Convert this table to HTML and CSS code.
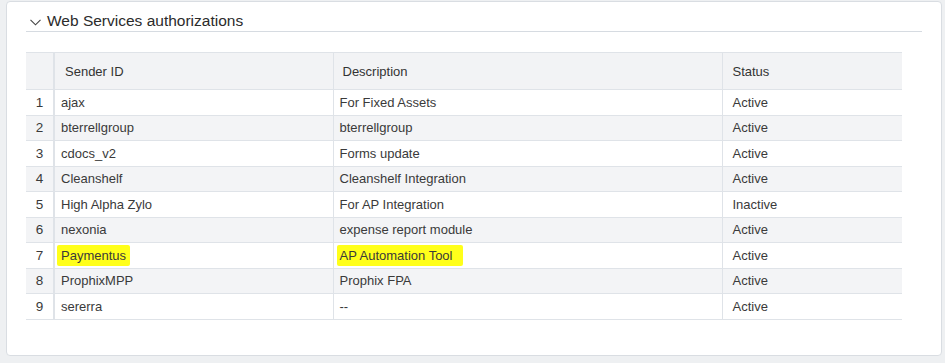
FILE: index.html
```html
<!DOCTYPE html>
<html>
<head>
<meta charset="utf-8">
<link rel="stylesheet" href="styles.css">
</head>
<body>
<div class="card">
  <div class="section-title">
    <svg class="chevron" width="11" height="7" viewBox="0 0 11 7"><path d="M0.5 0.8 L5.5 5.8 L10.5 0.8" fill="none" stroke="#444" stroke-width="1.1"/></svg>
    <span>Web Services authorizations</span>
  </div>
  <table class="grid">
    <colgroup>
      <col class="c-num"><col class="c-sender"><col class="c-desc"><col class="c-status">
    </colgroup>
    <thead>
      <tr><th></th><th class="h-sender">Sender ID</th><th class="h-desc">Description</th><th class="h-status">Status</th></tr>
    </thead>
    <tbody>
      <tr><td class="num">1</td><td>ajax</td><td>For Fixed Assets</td><td class="status">Active</td></tr>
      <tr><td class="num">2</td><td>bterrellgroup</td><td>bterrellgroup</td><td class="status">Active</td></tr>
      <tr><td class="num">3</td><td>cdocs_v2</td><td>Forms update</td><td class="status">Active</td></tr>
      <tr><td class="num">4</td><td>Cleanshelf</td><td>Cleanshelf Integration</td><td class="status">Active</td></tr>
      <tr><td class="num">5</td><td>High Alpha Zylo</td><td>For AP Integration</td><td class="status">Inactive</td></tr>
      <tr><td class="num">6</td><td>nexonia</td><td>expense report module</td><td class="status">Active</td></tr>
      <tr><td class="num">7</td><td><span class="hl hl-a">Paymentus</span></td><td><span class="hl hl-b">AP Automation Tool</span></td><td class="status">Active</td></tr>
      <tr><td class="num">8</td><td>ProphixMPP</td><td>Prophix FPA</td><td class="status">Active</td></tr>
      <tr><td class="num">9</td><td>sererra</td><td>--</td><td class="status">Active</td></tr>
    </tbody>
  </table>
</div>
</body>
</html>
```

FILE: styles.css
```css
html, body {
  margin: 0;
  padding: 0;
  background: #eef0f2;
  font-family: "Liberation Sans", Arial, sans-serif;
  color: #3a3a3a;
}

.card {
  margin: 1px 0 0 6px;
  width: 915px;
  height: 353px;
  background: #fff;
  border: 1px solid #d9dde2;
  border-radius: 4px;
  padding: 0 0 0 19px;
  box-sizing: content-box;
}

.section-title {
  display: flex;
  align-items: center;
  gap: 6px;
  width: 896px;
  height: 30px;
  border-bottom: 1px solid #d6dbe1;
  padding-left: 4px;
  box-sizing: border-box;
  font-size: 15.5px;
  color: #2b2b2b;
  padding-top: 9px;
}

.chevron {
  margin-top: 3px;
}

.grid {
  margin-top: 20px;
  border-collapse: collapse;
  table-layout: fixed;
  width: 876px;
  font-size: 13px;
}

.c-num { width: 28px; }
.c-sender { width: 279px; }
.c-desc { width: 389px; }
.c-status { width: 180px; }

.grid th {
  background: #f2f3f5;
  height: 36px;
  font-weight: normal;
  text-align: left;
  color: #333;
  border-top: 1px solid #dfe3e8;
  border-bottom: 1px solid #dfe3e8;
  border-left: 1px solid #dfe3e8;
  padding: 0;
  font-size: 13px;
}

.grid th:first-child { border-left: none; }
.grid th:nth-child(2) { border-left: 2px solid #dfe3e8; }

.h-sender { padding-left: 10px !important; }
.h-desc { padding-left: 9px !important; }
.h-status { padding-left: 10px !important; }

.grid td {
  height: 24.5px;
  padding: 0 0 0 6px;
  border-bottom: 1px solid #dfe3e8;
  border-left: 1px solid #dfe3e8;
  white-space: nowrap;
}

.grid td:first-child { border-left: none; }
.grid td:nth-child(2) { border-left: 2px solid #dfe3e8; }

.grid td.num {
  text-align: center;
  padding: 0;
  font-size: 13.5px;
}

.grid td.status { padding-left: 10px; }

.grid tbody tr:nth-child(even) td { background: #f3f4f6; }

.hl {
  background: #ffff1a;
  padding: 3px 4px 3px 4px;
  margin-left: -4px;
  border-radius: 2px;
}

.hl-b { padding-right: 10px; margin-left: -3px; padding-left: 3px; }
```
